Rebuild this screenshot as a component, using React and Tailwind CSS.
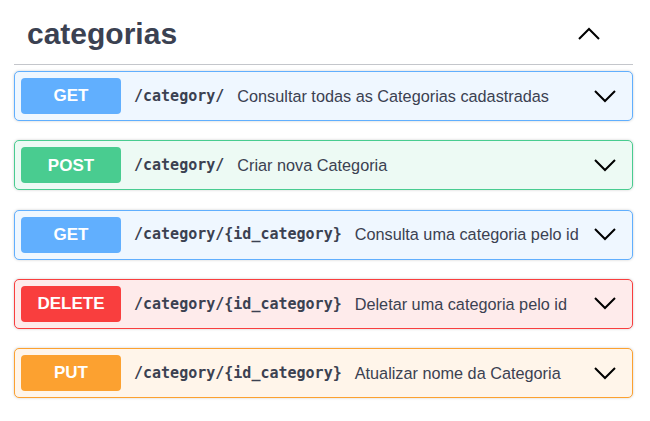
const ops = [
  {
    method: "GET",
    path: "/category/",
    summary: "Consultar todas as Categorias cadastradas",
    box: "border-[#61affe] bg-[#eff7ff]",
    badge: "bg-[#61affe]",
  },
  {
    method: "POST",
    path: "/category/",
    summary: "Criar nova Categoria",
    box: "border-[#49cc90] bg-[#edfaf4]",
    badge: "bg-[#49cc90]",
  },
  {
    method: "GET",
    path: "/category/{id_category}",
    summary: "Consulta uma categoria pelo id",
    box: "border-[#61affe] bg-[#eff7ff]",
    badge: "bg-[#61affe]",
  },
  {
    method: "DELETE",
    path: "/category/{id_category}",
    summary: "Deletar uma categoria pelo id",
    box: "border-[#f93e3e] bg-[#feebeb]",
    badge: "bg-[#f93e3e]",
  },
  {
    method: "PUT",
    path: "/category/{id_category}",
    summary: "Atualizar nome da Categoria",
    box: "border-[#fca130] bg-[#fff5ea]",
    badge: "bg-[#fca130]",
  },
];

const Chevron = ({ up }) => (
  <svg width="22" height="13" viewBox="0 0 22 13" fill="none">
    <path
      d={up ? "M1 12 L11 2 L21 12" : "M1 1 L11 11 L21 1"}
      stroke="#000"
      strokeWidth="2"
    />
  </svg>
);

const Operation = ({ op }) => (
  <div
    className={`flex items-center h-[50px] border rounded-[5px] px-[6px] shadow-[0_0_3px_rgba(0,0,0,0.19)] ${op.box}`}
  >
    <div
      className={`w-[100px] h-[36px] rounded-[4px] flex items-center justify-center text-white font-bold text-[17px] ${op.badge}`}
    >
      {op.method}
    </div>
    <span className="ml-[13px] font-['DejaVu_Sans_Mono',monospace] font-bold text-[15px] text-[#3b4151]">
      {op.path}
    </span>
    <span className="ml-[13px] text-[16.25px] text-[#3b4151]">{op.summary}</span>
    <div className="ml-auto mr-[10px] flex items-center">
      <Chevron />
    </div>
  </div>
);

const App = () => {
  return (
    <div className="w-[650px] h-[421px] bg-white font-['Liberation_Sans',Arial,sans-serif] pl-[14px] pr-[17px]">
      <div className="flex items-center justify-between h-[65px] pt-[2px] border-b border-[#c4c6cb] pl-[13px] pr-[33px]">
        <h3 className="text-[30px] font-bold text-[#3b4151]">categorias</h3>
        <Chevron up />
      </div>
      <div className="flex flex-col gap-[19.25px] mt-[6px]">
        {ops.map((op, i) => (
          <Operation key={i} op={op} />
        ))}
      </div>
    </div>
  );
};

export default App;
